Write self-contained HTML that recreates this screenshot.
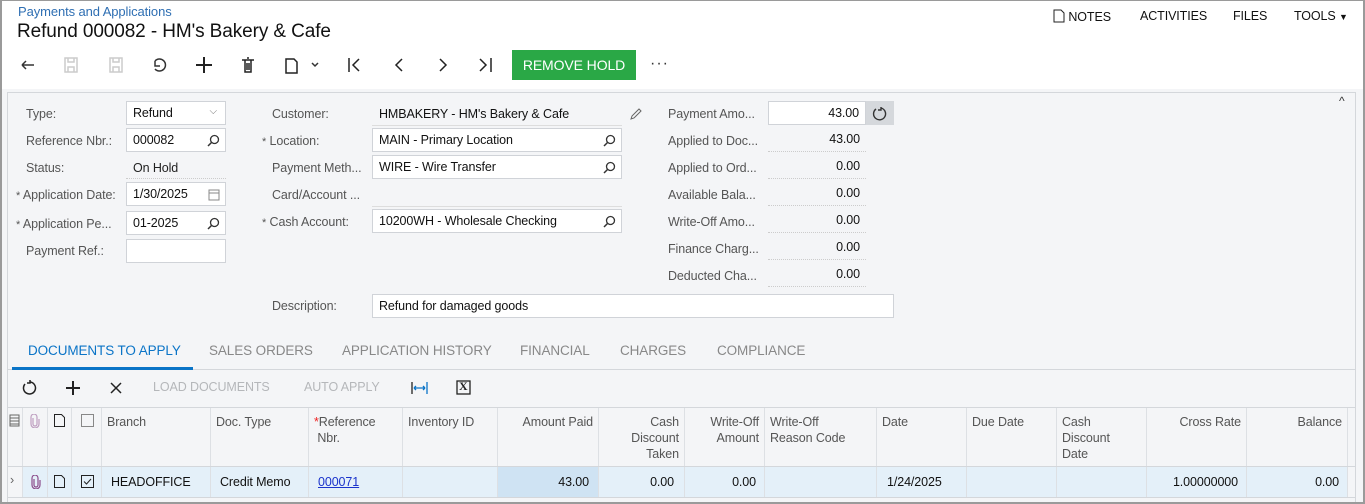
<!DOCTYPE html>
<html><head><meta charset="utf-8"><style>
*{box-sizing:border-box;margin:0;padding:0}
body{width:1365px;height:504px;overflow:hidden;background:#fff;font-family:"Liberation Sans",sans-serif;font-size:12.5px;color:#222;position:relative;letter-spacing:-0.1px}
.a{position:absolute;white-space:nowrap}
.frame{position:absolute;left:0;top:0;width:1365px;height:504px;border:1px solid #9a9a9a;border-left:2px solid #9a9a9a;border-right:2px solid #9a9a9a;border-bottom:2px solid #9a9a9a;pointer-events:none}
.lbl{color:#555}
.inp{position:absolute;background:#fff;border:1px solid #d0d3d8;height:24px;padding:4px 6px;white-space:nowrap;color:#111}
.ro{position:absolute;border-bottom:1px dotted #ccc;height:24px;padding:4px 6px;text-align:right;color:#111}
.req{color:#555;font-size:11px}
.mag{position:absolute;right:5px;top:5px}
.tab{position:absolute;top:343px;color:#888;font-size:13.5px}
.th{position:absolute;top:408px;height:59px;border-right:1px solid #dde0e4;padding:6px 5px;color:#555;line-height:16px}
.td{position:absolute;top:467px;height:30px;border-right:1px solid #dde0e4;padding:8px 6px;color:#111}
.r{text-align:right}
</style></head><body>
<svg width="0" height="0" style="position:absolute"><defs>
<symbol id="mg" viewBox="0 0 13 13"><circle cx="7.5" cy="5.5" r="4" fill="none" stroke="#333" stroke-width="1.3"/><path d="M4.5 8.5L1 12" stroke="#333" stroke-width="1.5"/></symbol>
<symbol id="clip" viewBox="0 0 10 14"><path d="M3 4v6a2 2 0 0 0 4 0V3a3 3 0 0 0-6 0v7a4 4 0 0 0 8 0V5" fill="none" stroke="#8a4a8a" stroke-width="1.2"/></symbol>
</defs></svg>
<div class="a" style="left:18px;top:4px;color:#2f6fb3;font-size:13px">Payments and Applications</div>
<div class="a" style="left:17px;top:21px;font-size:19px;color:#111">Refund 000082 - HM's Bakery &amp; Cafe</div>
<div class="a" style="left:1053px;top:9px;font-size:12.5px;color:#111">
<svg width="12" height="14" style="vertical-align:-2px"><path d="M1 1h7l3 3v9H1z" fill="none" stroke="#222"/></svg> NOTES</div>
<div class="a" style="left:1140px;top:9px;color:#111">ACTIVITIES</div>
<div class="a" style="left:1233px;top:9px;color:#111">FILES</div>
<div class="a" style="left:1294px;top:9px;color:#111">TOOLS <span style="font-size:9px">▼</span></div>

<svg class="a" style="left:18px;top:55px" width="660" height="22" fill="none" stroke-width="1.5">
<path d="M4 10h12M4 10l4-4M4 10l4 4" stroke="#333"/>
<g stroke="#ccc"><rect x="47" y="3" width="12" height="14"/><path d="M50 3v4h6V3M50 17v-5h6v5"/></g>
<g stroke="#ccc"><rect x="92" y="3" width="12" height="14"/><path d="M95 3v4h6V3M95 17v-5h6v5"/></g>
<path d="M137 6a6 6 0 1 1 0 8M137 6v5h5" stroke="#333"/>
<path d="M186 2v16M178 10h16" stroke="#222" stroke-width="2"/>
<path d="M224 5h12M227 5v12h6V5M229 3h2M229 8v7M231 8v7" stroke="#222"/>
<path d="M268 4h8l3 3v11h-11z" stroke="#222"/><path d="M294 8l3 3 3-3" stroke="#333"/>
<path d="M331 3v14M341 4l-6 6 6 6" stroke="#222"/>
<path d="M384 4l-6 6 6 6" stroke="#222"/>
<path d="M422 4l6 6-6 6" stroke="#222"/>
<path d="M462 4l6 6-6 6M473 3v14" stroke="#222"/>
</svg>
<div class="a" style="left:512px;top:50px;width:124px;height:30px;background:#2aa846;color:#fff;font-size:14px;text-align:center;line-height:30px">REMOVE HOLD</div>
<div class="a" style="left:650px;top:55px;font-size:16px;color:#333;letter-spacing:1px">···</div>

<div class="a" style="left:2px;top:89px;width:1361px;height:415px;background:#f4f5f7"></div>
<div class="a" style="left:7px;top:92px;width:1349px;height:412px;border:1px solid #d4d7db;border-bottom:none"></div>
<div class="a" style="left:1339px;top:94px;font-size:12px;color:#333">^</div>

<div class="a lbl" style="left:26px;top:107px">Type:</div>
<div class="inp" style="left:126px;top:101px;width:100px">Refund<span style="position:absolute;right:8px;top:4px;color:#777;font-size:10px">⌵</span></div>
<div class="a lbl" style="left:26px;top:134px">Reference Nbr.:</div>
<div class="inp" style="left:126px;top:128px;width:100px">000082<svg class="mag" width="13" height="13"><use href="#mg"/></svg></div>
<div class="a lbl" style="left:26px;top:161px">Status:</div>
<div class="a" style="left:133px;top:161px">On Hold</div>
<div class="a" style="left:126px;top:178px;width:100px;border-top:1px dotted #ccc"></div>
<div class="a lbl" style="left:16px;top:188px"><span class="req">*</span> Application Date:</div>
<div class="inp" style="left:126px;top:182px;width:100px">1/30/2025<svg style="position:absolute;right:5px;top:5px" width="12" height="13" fill="none" stroke="#888"><rect x="1" y="2" width="10" height="10"/><path d="M1 5h10"/></svg></div>
<div class="a lbl" style="left:16px;top:217px"><span class="req">*</span> Application Pe...</div>
<div class="inp" style="left:126px;top:211px;width:100px">01-2025<svg class="mag" width="13" height="13"><use href="#mg"/></svg></div>
<div class="a lbl" style="left:26px;top:244px">Payment Ref.:</div>
<div class="inp" style="left:126px;top:239px;width:100px"></div>

<div class="a lbl" style="left:272px;top:107px">Customer:</div>
<div class="a" style="left:379px;top:107px;color:#111">HMBAKERY - HM's Bakery &amp; Cafe</div>
<div class="a" style="left:372px;top:125px;width:250px;border-top:1px solid #ddd"></div>
<svg class="a" style="left:630px;top:107px" width="13" height="13" fill="none" stroke="#666"><path d="M1 12l1-3 7-7 2 2-7 7z"/></svg>
<div class="a lbl" style="left:262px;top:134px"><span class="req">*</span> Location:</div>
<div class="inp" style="left:372px;top:128px;width:250px">MAIN - Primary Location<svg class="mag" width="13" height="13"><use href="#mg"/></svg></div>
<div class="a lbl" style="left:272px;top:161px">Payment Meth...</div>
<div class="inp" style="left:372px;top:155px;width:250px">WIRE - Wire Transfer<svg class="mag" width="13" height="13"><use href="#mg"/></svg></div>
<div class="a lbl" style="left:272px;top:188px">Card/Account ...</div>
<div class="a" style="left:372px;top:206px;width:250px;border-top:1px solid #ddd"></div>
<div class="a lbl" style="left:262px;top:215px"><span class="req">*</span> Cash Account:</div>
<div class="inp" style="left:372px;top:209px;width:250px">10200WH - Wholesale Checking<svg class="mag" width="13" height="13"><use href="#mg"/></svg></div>
<div class="a lbl" style="left:272px;top:299px">Description:</div>
<div class="inp" style="left:372px;top:294px;width:522px">Refund for damaged goods</div>

<div class="a lbl" style="left:668px;top:107px">Payment Amo...</div>
<div class="inp" style="left:768px;top:101px;width:98px;text-align:right">43.00</div>
<div class="a" style="left:866px;top:101px;width:28px;height:24px;background:#d5d8dc"></div>
<svg class="a" style="left:872px;top:106px" width="15" height="15" fill="none" stroke="#333" stroke-width="1.4"><path d="M4 3a6 6 0 1 0 5-1M9 1v3h-3"/></svg>
<div class="a lbl" style="left:668px;top:134px">Applied to Doc...</div>
<div class="ro" style="left:768px;top:128px;width:98px">43.00</div>
<div class="a lbl" style="left:668px;top:161px">Applied to Ord...</div>
<div class="ro" style="left:768px;top:155px;width:98px">0.00</div>
<div class="a lbl" style="left:668px;top:188px">Available Bala...</div>
<div class="ro" style="left:768px;top:182px;width:98px">0.00</div>
<div class="a lbl" style="left:668px;top:215px">Write-Off Amo...</div>
<div class="ro" style="left:768px;top:209px;width:98px">0.00</div>
<div class="a lbl" style="left:668px;top:242px">Finance Charg...</div>
<div class="ro" style="left:768px;top:236px;width:98px">0.00</div>
<div class="a lbl" style="left:668px;top:269px">Deducted Cha...</div>
<div class="ro" style="left:768px;top:263px;width:98px">0.00</div>

<div class="a" style="left:7px;top:369px;width:1349px;border-top:1px solid #d4d7db"></div>
<div class="a" style="left:12px;top:367px;width:181px;height:3px;background:#0a74c7"></div>
<div class="tab" style="left:28px;color:#0a74c7">DOCUMENTS TO APPLY</div>
<div class="tab" style="left:209px">SALES ORDERS</div>
<div class="tab" style="left:342px">APPLICATION HISTORY</div>
<div class="tab" style="left:520px">FINANCIAL</div>
<div class="tab" style="left:620px">CHARGES</div>
<div class="tab" style="left:717px">COMPLIANCE</div>

<svg class="a" style="left:20px;top:378px" width="120" height="20" fill="none" stroke="#222" stroke-width="1.5">
<path d="M5 6a6 6 0 1 0 5-2M10 2v3h-3"/>
<path d="M53 3v14M46 10h14" stroke-width="2"/>
<path d="M91 5l10 10M101 5l-10 10"/>
</svg>
<div class="a" style="left:153px;top:380px;color:#b5b7ba">LOAD DOCUMENTS</div>
<div class="a" style="left:304px;top:380px;color:#b5b7ba">AUTO APPLY</div>
<svg class="a" style="left:411px;top:380px" width="70" height="16" fill="none" stroke-width="1.3">
<path d="M16 2v12M3 8h11M3 8l2-2M3 8l2 2M14 8l-2-2M14 8l-2 2" stroke="#0a74c7"/><path d="M1 2v12" stroke="#222"/>
<rect x="46" y="1" width="13" height="13" stroke="#222"/>
</svg>
<div class="a" style="left:459px;top:379px;font-weight:bold;font-size:12px;font-family:'Liberation Serif',serif">X</div>
<div class="a" style="left:7px;top:407px;width:1349px;border-top:1px solid #d4d7db"></div>

<div class="th" style="left:7px;width:16px;padding:6px 2px"><svg width="11" height="13" fill="none" stroke="#666"><rect x="1" y="1" width="9" height="11"/><path d="M1 4h9M1 7h9M1 10h9"/></svg></div>
<div class="th" style="left:23px;width:25px;padding:6px 7px"><svg width="10" height="14" style="opacity:.5"><use href="#clip"/></svg></div>
<div class="th" style="left:48px;width:24px;padding:6px 6px"><svg width="11" height="13" fill="none" stroke="#222"><path d="M.5.5h7l3 3v9h-10z"/></svg></div>
<div class="th" style="left:72px;width:30px;padding:6px 9px"><svg width="13" height="13" fill="none" stroke="#888"><rect x=".5" y=".5" width="12" height="12"/></svg></div>
<div class="th" style="left:102px;width:109px">Branch</div>
<div class="th" style="left:211px;width:98px">Doc. Type</div>
<div class="th" style="left:309px;width:94px"><span style="color:#e22">*</span>Reference<br>&nbsp;Nbr.</div>
<div class="th" style="left:403px;width:95px">Inventory ID</div>
<div class="th r" style="left:498px;width:101px">Amount Paid</div>
<div class="th r" style="left:599px;width:86px">Cash<br>Discount<br>Taken</div>
<div class="th r" style="left:685px;width:80px">Write-Off<br>Amount</div>
<div class="th" style="left:765px;width:112px">Write-Off<br>Reason Code</div>
<div class="th" style="left:877px;width:90px">Date</div>
<div class="th" style="left:967px;width:90px">Due Date</div>
<div class="th" style="left:1057px;width:90px">Cash<br>Discount<br>Date</div>
<div class="th r" style="left:1147px;width:100px">Cross Rate</div>
<div class="th r" style="left:1247px;width:101px">Balance</div>
<div class="a" style="left:7px;top:466px;width:1349px;border-top:1px solid #d4d7db"></div>

<div class="a" style="left:23px;top:467px;width:1325px;height:30px;background:#e4f0f9"></div>
<div class="a" style="left:498px;top:467px;width:101px;height:30px;background:#cfe3f3"></div>
<div class="td" style="left:7px;width:16px;padding:6px 3px;color:#666">›</div>
<div class="td" style="left:23px;width:25px;padding:8px 8px"><svg width="10" height="14"><use href="#clip"/></svg></div>
<div class="td" style="left:48px;width:24px;padding:8px 6px"><svg width="11" height="13" fill="none" stroke="#222"><path d="M.5.5h7l3 3v9h-10z"/></svg></div>
<div class="td" style="left:72px;width:30px;padding:8px 9px"><svg width="13" height="13" fill="none" stroke="#222"><rect x=".5" y=".5" width="12" height="12"/><path d="M3 6.5l2.5 2.5 4.5-5"/></svg></div>
<div class="td" style="left:102px;width:109px;padding-left:9px">HEADOFFICE</div>
<div class="td" style="left:211px;width:98px;padding-left:9px">Credit Memo</div>
<div class="td" style="left:309px;width:94px;padding-left:9px"><span style="color:#1a33cc;text-decoration:underline">000071</span></div>
<div class="td" style="left:403px;width:95px"></div>
<div class="td r" style="left:498px;width:101px;padding-right:9px">43.00</div>
<div class="td r" style="left:599px;width:86px;padding-right:10px">0.00</div>
<div class="td r" style="left:685px;width:80px;padding-right:8px">0.00</div>
<div class="td" style="left:765px;width:112px"></div>
<div class="td" style="left:877px;width:90px;padding-left:10px">1/24/2025</div>
<div class="td" style="left:967px;width:90px"></div>
<div class="td" style="left:1057px;width:90px"></div>
<div class="td r" style="left:1147px;width:100px;padding-right:8px">1.00000000</div>
<div class="td r" style="left:1247px;width:101px;padding-right:8px">0.00</div>
<div class="a" style="left:7px;top:497px;width:1349px;border-top:1px solid #d4d7db"></div>

<div class="frame"></div>
</body></html>
